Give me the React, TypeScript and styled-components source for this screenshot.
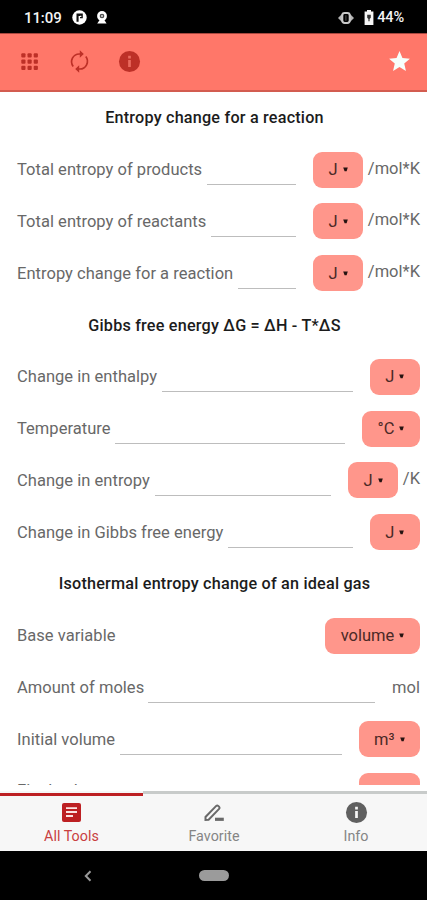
import React from "react";
import styled, { createGlobalStyle } from "styled-components";

const GlobalStyle = createGlobalStyle`
  * { box-sizing: border-box; }
  body { margin: 0; background: #fff; font-family: Roboto, sans-serif; }
`;

const Screen = styled.div`
  width: 427px;
  height: 900px;
  display: flex;
  flex-direction: column;
  overflow: hidden;
  background: #fff;
`;

const StatusBar = styled.header`
  height: 33px;
  flex: none;
  display: flex;
  align-items: center;
  padding: 2px 23px 0 24px;
  background: #000;
  color: #f4f4f4;
  font-size: 15px;
  font-weight: 500;
  svg { display: block; }
`;

const Clock = styled.span`
  width: 48px;
  letter-spacing: -0.1px;
`;

const StatusIcons = styled.div<{ $gap: number }>`
  display: flex;
  align-items: center;
  gap: ${(p) => p.$gap}px;
`;

const Spacer = styled.div`
  flex: 1;
`;

const Battery = styled.span`
  margin-left: 3px;
  font-size: 14.5px;
  letter-spacing: -0.1px;
`;

const Toolbar = styled.nav`
  height: 59px;
  flex: none;
  display: flex;
  align-items: center;
  padding: 0 15px 2px 17px;
  background: #ff7769;
  border-top: 1px solid #a8473e;
  border-bottom: 2px solid #d35c50;
  color: #bd3027;
`;

const ToolButton = styled.button<{ $gap?: number }>`
  width: 25px;
  height: 25px;
  margin-right: ${(p) => p.$gap ?? 0}px;
  padding: 0;
  border: 0;
  background: none;
  color: inherit;
  svg { display: block; }
`;

const List = styled.main`
  height: 693px;
  flex: none;
  overflow: hidden;
`;

const rowHeight = 51.79;

const Heading = styled.h2`
  height: ${rowHeight}px;
  margin: 0;
  display: flex;
  align-items: center;
  justify-content: center;
  padding-left: 2px;
  font-size: 16.2px;
  font-weight: 500;
  color: #1c1c1c;
`;

const Title = styled.span<{ $spacing: number }>`
  letter-spacing: ${(p) => p.$spacing}px;
  white-space: pre;
`;

const Row = styled.div`
  height: ${rowHeight}px;
  display: flex;
  align-items: center;
  padding: 0 7px 0 17px;
  font-size: 16.5px;
  color: #686868;
`;

const Label = styled.span<{ $width: number; $lift?: number }>`
  width: ${(p) => p.$width}px;
  flex: none;
  padding-bottom: ${(p) => p.$lift ?? 0}px;
  white-space: nowrap;
  letter-spacing: 0.03px;
`;

const Field = styled.div<{ $line: boolean }>`
  flex: 1;
  height: 31px;
  margin-right: 17px;
  border-bottom: ${(p) => (p.$line ? "1px solid #bdbdbd" : "0")};
`;

const UnitButton = styled.button<{ $width: number }>`
  width: ${(p) => p.$width}px;
  height: 36px;
  flex: none;
  display: flex;
  align-items: center;
  justify-content: center;
  gap: 5px;
  padding: 0;
  border: 0;
  border-radius: 9px;
  background: #ff968b;
  color: #4b2926;
  font: 400 16.5px Roboto, sans-serif;
  letter-spacing: 0;
`;

const Suffix = styled.span<{ $width: number; $raised?: boolean }>`
  width: ${(p) => p.$width}px;
  flex: none;
  padding-bottom: ${(p) => (p.$raised ? 3 : 0)}px;
  text-align: right;
  white-space: nowrap;
  letter-spacing: 0;
`;

const TabBar = styled.nav`
  height: 66px;
  flex: none;
  display: grid;
  grid-template-columns: 143px 142px 142px;
  background: linear-gradient(#fff 6px, #f7f7f7 6px);
`;

const Tab = styled.button<{ $active?: boolean }>`
  display: flex;
  flex-direction: column;
  align-items: center;
  margin-top: ${(p) => (p.$active ? 8 : 6)}px;
  padding: ${(p) => (p.$active ? 4 : 6)}px 0 0;
  border: 0;
  border-top: ${(p) => (p.$active ? "3px solid #bd2023" : "3px solid #c8cbca")};
  background: none;
  color: ${(p) => (p.$active ? "#c9403f" : "#858585")};
  font: 400 14.3px/18px Roboto, sans-serif;
  letter-spacing: 0.04px;
`;

const TabIcon = styled.span`
  height: 25px;
  margin-bottom: 2px;
  display: flex;
  align-items: center;
  justify-content: center;
  svg { display: block; }
`;

const SystemBar = styled.footer`
  flex: 1;
  display: flex;
  align-items: center;
  padding: 0 0 0 82px;
  background: #000;
`;

const HomePill = styled.div`
  width: 30px;
  height: 11px;
  margin-left: 105px;
  border-radius: 6px;
  background: #9b9b9b;
`;

const Caret = () => (
  <svg width="5" height="5" viewBox="0 0 5 5" fill="#261311">
    <path d="M.2.4h4.6L3.6 4.3H1.6z" />
  </svg>
);

const InfoGlyph = ({ color, mark, size }: { color: string; mark: string; size: number }) => (
  <svg width={size} height={size} viewBox="0 0 24 24">
    <circle cx="12" cy="12" r="10.1" fill={color} />
    <path d="M10.7 6.5h2.6V9h-2.6zm0 4h2.6v6.8h-2.6z" fill={mark} />
  </svg>
);

type Item = {
  heading?: boolean;
  text: string;
  spacing?: number;
  labelWidth?: number;
  lift?: number;
  unit?: string;
  unitWidth?: number;
  suffix?: string;
  suffixWidth?: number;
  noLine?: boolean;
};

const items: Item[] = [
  { heading: true, text: "Entropy change for a reaction", spacing: 0.2 },
  { text: "Total entropy of products", labelWidth: 190, unit: "J", unitWidth: 50, suffix: "/mol*K", suffixWidth: 57 },
  { text: "Total entropy of reactants", labelWidth: 194, unit: "J", unitWidth: 50, suffix: "/mol*K", suffixWidth: 57 },
  { text: "Entropy change for a reaction", labelWidth: 220.5, unit: "J", unitWidth: 50, suffix: "/mol*K", suffixWidth: 57 },
  { heading: true, text: "Gibbs free energy ΔG = ΔH - T*ΔS", spacing: 0.2 },
  { text: "Change in enthalpy", labelWidth: 145, unit: "J", unitWidth: 50.5 },
  { text: "Temperature", labelWidth: 98, unit: "°C", unitWidth: 58 },
  { text: "Change in entropy", labelWidth: 137.5, unit: "J", unitWidth: 50, suffix: "/K", suffixWidth: 22 },
  { text: "Change in Gibbs free energy", labelWidth: 211, unit: "J", unitWidth: 50.5 },
  { heading: true, text: "Isothermal entropy change of an ideal gas", spacing: 0.2 },
  { text: "Base variable", labelWidth: 103, unit: "volume", unitWidth: 95, noLine: true },
  { text: "Amount of moles", labelWidth: 131, suffix: "mol", suffixWidth: 28 },
  { text: "Initial volume", labelWidth: 103, unit: "m³", unitWidth: 61.5 },
  { text: "Final volume", labelWidth: 103, lift: 2, unit: "", unitWidth: 61.5 },
];

export default function App() {
  return (
    <>
      <GlobalStyle />
      <Screen>
        <StatusBar>
          <Clock>11:09</Clock>
          <StatusIcons $gap={9}>
            <svg width="15" height="15" viewBox="0 0 15 15">
              <circle cx="7.5" cy="7.5" r="7.2" fill="#fff" />
              <path d="M4.5 3.5h6.3v4.8H8V5.9H6.6v5.9H4.5z" fill="#111" />
              <path d="M8 5.8h1.4v1.3H8z" fill="#fff" />
            </svg>
            <svg width="12" height="13" viewBox="0 0 12 13">
              <circle cx="6" cy="5" r="4.9" fill="#fff" />
              <path d="M3.8 8.8h4.4l2.4 3.8H1.2z" fill="#fff" />
              <circle cx="6" cy="5" r="2.3" fill="#444" />
              <circle cx="6" cy="5" r="1.2" fill="#bbb" />
            </svg>
          </StatusIcons>
          <Spacer />
          <StatusIcons $gap={10}>
            <svg width="16" height="12" viewBox="0 0 16 12">
              <path d="M0 6l4-4v8zM16 6l-4-4v8z" fill="#b5b5b5" />
              <rect x="4.3" y="1" width="7.4" height="10" rx="2.4" fill="none" stroke="#c8c8c8" strokeWidth="2" />
              <path d="M7.9 3.3v5.4" stroke="#555" strokeWidth="1" />
            </svg>
            <svg width="10" height="15" viewBox="0 0 10 15">
              <path d="M3 0h4v1.6h2.4V15H.6V1.6H3z" fill="#f5f5f5" />
              <path d="M3.2 4.7h3.6v3L5.6 9v2.3H4.4V9L3.2 7.7z" fill="#333" />
            </svg>
          </StatusIcons>
          <Battery>44%</Battery>
        </StatusBar>
        <Toolbar>
          <ToolButton $gap={25} aria-label="All tools">
            <svg width="25" height="25" viewBox="0 0 25 25" fill="currentColor">
              {[4.3, 10.5, 16.7].map((y) =>
                [4.3, 10.5, 16.7].map((x) => <rect key={`${x}-${y}`} x={x} y={y} width="4.2" height="4.2" rx="1" />),
              )}
            </svg>
          </ToolButton>
          <ToolButton $gap={24.5} aria-label="Reset">
            <svg width="25" height="25" viewBox="0 0 25 25" fill="none" stroke="currentColor" strokeWidth="1.7">
              <path d="M6.2 17.4A7.7 7.7 0 0 1 12.5 5h1.2M18.8 7.6A7.7 7.7 0 0 1 12.5 20h-1.2" />
              <path d="M12.8 1.2L16.8 5l-4 3.8zM12.2 16.2L8.2 20l4 3.8z" fill="currentColor" stroke="none" />
            </svg>
          </ToolButton>
          <ToolButton aria-label="Information">
            <InfoGlyph color="#bd3027" mark="#e96a5e" size={25} />
          </ToolButton>
          <Spacer />
          <ToolButton aria-label="Favorite">
            <svg width="25" height="25" viewBox="0 0 24 24" fill="#f7fffb">
              <path d="M12 17.27 18.18 21l-1.64-7.03L22 9.24l-7.19-.61L12 2 9.19 8.63 2 9.24l5.46 4.73L5.82 21z" />
            </svg>
          </ToolButton>
        </Toolbar>
        <List>
          {items.map((item) =>
            item.heading ? (
              <Heading key={item.text}>
                <Title $spacing={item.spacing ?? 0}>{item.text}</Title>
              </Heading>
            ) : (
              <Row key={item.text}>
                <Label $width={item.labelWidth ?? 0} $lift={item.lift}>
                  {item.text}
                </Label>
                <Field $line={!item.noLine} />
                {item.unit !== undefined && (
                  <UnitButton $width={item.unitWidth ?? 50}>
                    {item.unit}
                    <Caret />
                  </UnitButton>
                )}
                {item.suffix && (
                  <Suffix $width={item.suffixWidth ?? 0} $raised={!!item.unit}>
                    {item.suffix}
                  </Suffix>
                )}
              </Row>
            ),
          )}
        </List>
        <TabBar>
          <Tab $active>
            <TabIcon>
              <svg width="19" height="19" viewBox="0 0 19 19">
                <rect width="19" height="19" rx="2" fill="#bd2023" />
                <path d="M4 5.1h11M4 9h11M4 13h7" stroke="#fbe4e3" strokeWidth="1.8" />
              </svg>
            </TabIcon>
            All Tools
          </Tab>
          <Tab>
            <TabIcon>
              <svg width="22" height="19" viewBox="0 0 22 19" fill="none" stroke="#696969" strokeWidth="2">
                <path d="M2.5 17v-3L13.2 2.9q1-.9 2 0l1 1q.9 1-.1 2L5.6 16.7z" />
                <path d="M12 16.3h8.8" strokeWidth="3.2" />
              </svg>
            </TabIcon>
            Favorite
          </Tab>
          <Tab>
            <TabIcon>
              <InfoGlyph color="#606060" mark="#f7f7f7" size={25} />
            </TabIcon>
            Info
          </Tab>
        </TabBar>
        <SystemBar>
          <svg width="12" height="14" viewBox="0 0 12 14" fill="none" stroke="#999" strokeWidth="2">
            <path d="M8.5 2.2L3.8 7l4.7 4.8" />
          </svg>
          <HomePill />
        </SystemBar>
      </Screen>
    </>
  );
}
